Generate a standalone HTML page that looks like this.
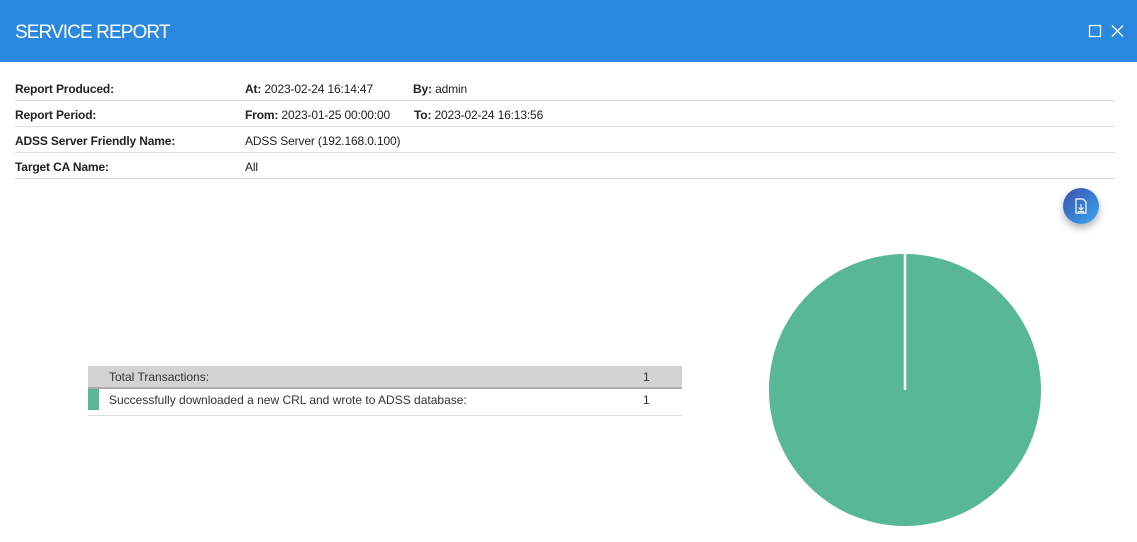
<!DOCTYPE html>
<html><head><style>
body{margin:0;width:1137px;height:542px;overflow:hidden;background:#fff;font-family:"Liberation Sans",Arial,sans-serif;color:#222;position:relative}
.hdr{position:absolute;left:0;top:0;width:1137px;height:62px;background:#2a88de}
.hdr .t{position:absolute;left:15px;top:22px;color:#fff;font-size:19px;letter-spacing:-0.9px}
.row{position:absolute;left:15px;width:1100px;height:26px;border-bottom:1px solid #ddd;font-size:12px;letter-spacing:-0.15px}
.row span{position:absolute;top:8px}
b{font-weight:bold}
.tbl{position:absolute;left:88px;width:594px;font-size:12px;color:#333}
</style></head><body>
<div class="hdr"><div class="t">SERVICE REPORT</div>
<svg style="position:absolute;left:1088px;top:24px" width="40" height="16"><rect x="1.5" y="1.5" width="11" height="11" fill="none" stroke="#fff" stroke-width="1.3"/><path d="M24 1.5L35 12.5M35 1.5L24 12.5" stroke="#fff" stroke-width="1.3"/></svg>
</div>
<div class="row" style="top:74px"><span style="left:0"><b>Report Produced:</b></span><span style="left:230px"><b>At:</b> 2023-02-24 16:14:47</span><span style="left:398px"><b>By:</b> admin</span></div>
<div class="row" style="top:100px"><span style="left:0"><b>Report Period:</b></span><span style="left:230px"><b>From:</b> 2023-01-25 00:00:00</span><span style="left:399px"><b>To:</b> 2023-02-24 16:13:56</span></div>
<div class="row" style="top:126px"><span style="left:0"><b>ADSS Server Friendly Name:</b></span><span style="left:230px">ADSS Server (192.168.0.100)</span></div>
<div class="row" style="top:152px"><span style="left:0"><b>Target CA Name:</b></span><span style="left:230px">All</span></div>
<div style="position:absolute;left:1063px;top:188px;width:36px;height:36px;border-radius:50%;background:linear-gradient(135deg,#3b4fb0,#3aa8ee);box-shadow:0 4px 8px rgba(0,0,0,0.3)">
<svg width="36" height="36"><path d="M13 11h7l3 3v11h-10z" fill="none" stroke="#fff" stroke-width="1.2"/><path d="M18 16v6M15.5 19.5L18 22l2.5-2.5M15 23.5h6" fill="none" stroke="#fff" stroke-width="1"/></svg></div>
<div class="tbl" style="top:366px;height:21px;background:#d3d3d3;border-bottom:2px solid #aaa"><span style="position:absolute;left:21px;top:4px">Total Transactions:</span><span style="position:absolute;left:555px;top:4px">1</span></div>
<div class="tbl" style="top:389px;height:26px;border-bottom:1px solid #ddd"><div style="position:absolute;left:0;top:0;width:11px;height:21px;background:#58b896"></div><span style="position:absolute;left:21px;top:4px">Successfully downloaded a new CRL and wrote to ADSS database:</span><span style="position:absolute;left:555px;top:4px">1</span></div>
<svg style="position:absolute;left:768px;top:253px" width="276" height="276"><circle cx="137" cy="137" r="136" fill="#58b896"/><line x1="137" y1="0" x2="137" y2="137" stroke="#fff" stroke-width="2.5"/></svg>
</body></html>
